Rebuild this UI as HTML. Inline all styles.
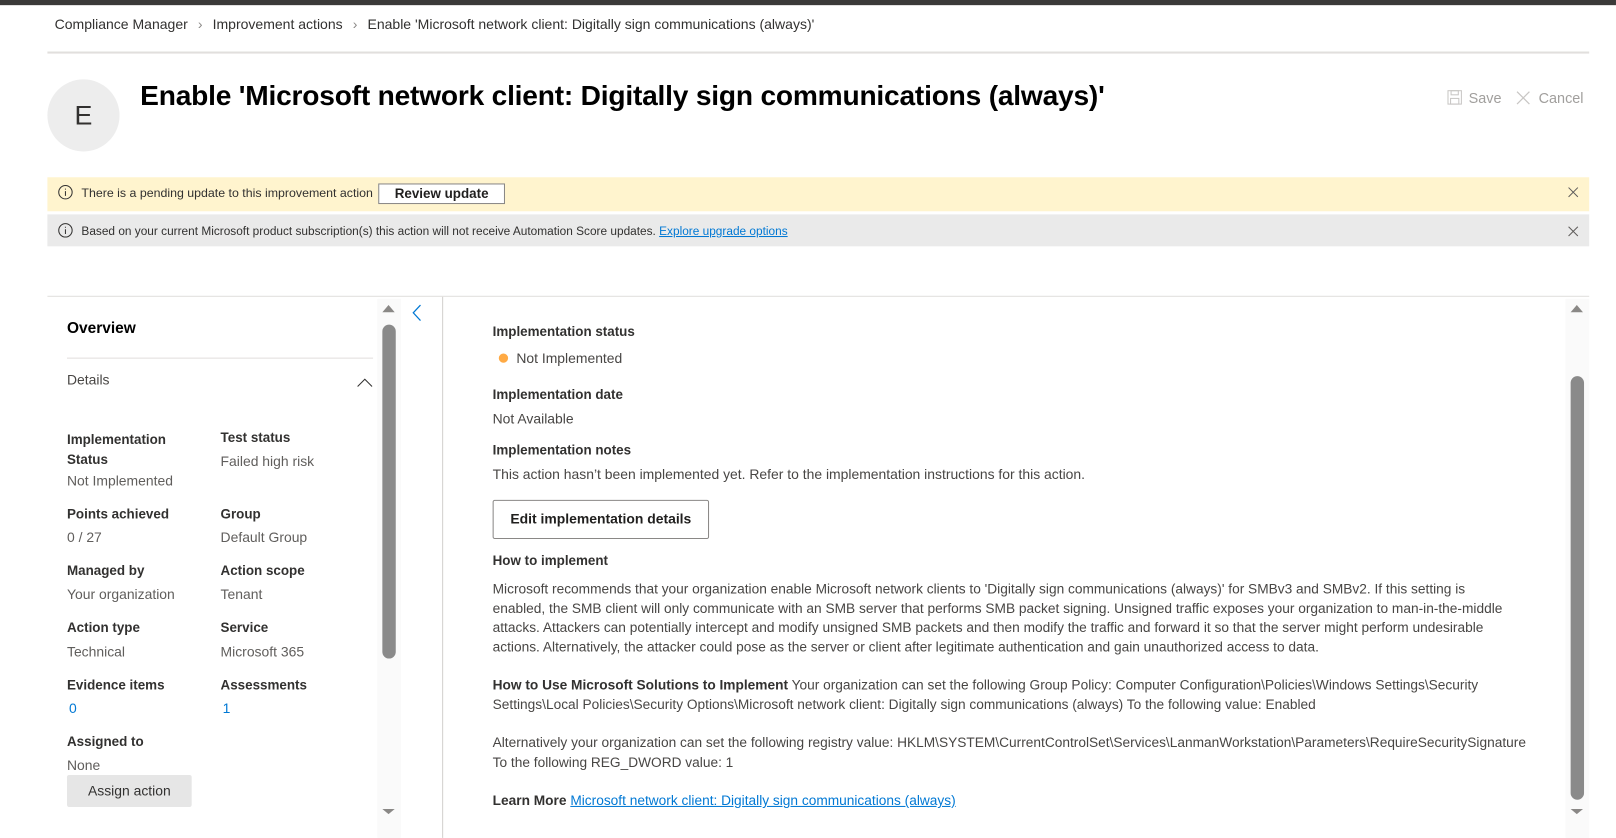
<!DOCTYPE html>
<html><head><meta charset="utf-8"><style>
*{margin:0;padding:0;box-sizing:border-box}
html,body{width:1616px;height:813px;overflow:hidden;background:#fff}
#w{position:absolute;left:0;top:0;width:1568px;height:789px;transform:scale(1.0306);transform-origin:0 0;font-family:"Liberation Sans",sans-serif;color:#323130;font-size:13px}
.a{position:absolute;white-space:nowrap}
.lb{font-size:13px;color:#323130;font-weight:600}
.v{font-size:13.5px;color:#605e5c}
.p{font-size:13.3px;color:#484644;line-height:18.7px}
.lnk{color:#0078d4}
</style></head><body><div id="w">
<div class="a" style="left:0;top:0;width:1568px;height:5px;background:#3b3a39"></div>
<div class="a" style="left:53px;top:16px;font-size:13.6px;color:#323130">Compliance Manager <span style="color:#8a8886;margin:0 6px">&#x203A;</span> Improvement actions <span style="color:#8a8886;margin:0 6px">&#x203A;</span> Enable 'Microsoft network client: Digitally sign communications (always)'</div>
<div class="a" style="left:46px;top:50px;width:1496px;height:2px;background:#e1dfdd"></div>
<div class="a" style="left:46px;top:77px;width:70px;height:70px;border-radius:50%;background:#ededed;font-size:26px;line-height:70px;text-align:center;color:#323130">E</div>
<div class="a" style="left:136px;top:77px;font-size:27.3px;font-weight:bold;color:#000;letter-spacing:-0.2px">Enable 'Microsoft network client: Digitally sign communications (always)'</div>
<div class="a" style="left:1404px;top:87px;font-size:14px;color:#a19f9d"><svg width="15" height="15" viewBox="0 0 15 15" style="vertical-align:-2px;margin-right:6px"><rect x="1" y="1" width="13" height="13" fill="none" stroke="#c8c6c4"/><rect x="4" y="1" width="7" height="4" fill="none" stroke="#c8c6c4"/><rect x="3.5" y="8.5" width="8" height="5.5" fill="none" stroke="#c8c6c4"/></svg>Save<svg width="14" height="14" viewBox="0 0 14 14" style="vertical-align:-2px;margin:0 8px 0 14px"><path d="M1 1L13 13M13 1L1 13" stroke="#c8c6c4" stroke-width="1.2"/></svg>Cancel</div>
<div class="a" style="left:46px;top:172px;width:1496px;height:33px;background:#fff4ce"></div>
<div class="a" style="left:56px;top:179px;font-size:12px;color:#323130"><svg width="15" height="15" viewBox="0 0 15 15" style="vertical-align:-3px;margin-right:8px"><circle cx="7.5" cy="7.5" r="6.5" fill="none" stroke="#323130"/><path d="M7.5 6.5V11M7.5 4v1" stroke="#323130"/></svg>There is a pending update to this improvement action</div>
<div class="a" style="left:367px;top:178px;width:123px;height:20px;border:1px solid #8a8886;background:#fff;font-size:13px;font-weight:600;text-align:center;line-height:18px;color:#201f1e">Review update</div>
<div class="a" style="left:1521px;top:180px"><svg width="11" height="11"><path d="M1 1L10 10M10 1L1 10" stroke="#605e5c"/></svg></div>
<div class="a" style="left:46px;top:208px;width:1496px;height:31px;background:#eaeaea"></div>
<div class="a" style="left:56px;top:216px;font-size:11.5px;color:#323130"><svg width="15" height="15" viewBox="0 0 15 15" style="vertical-align:-3px;margin-right:8px"><circle cx="7.5" cy="7.5" r="6.5" fill="none" stroke="#323130"/><path d="M7.5 6.5V11M7.5 4v1" stroke="#323130"/></svg>Based on your current Microsoft product subscription(s) this action will not receive Automation Score updates. <span style="color:#0078d4;text-decoration:underline">Explore upgrade options</span></div>
<div class="a" style="left:1521px;top:218px"><svg width="11" height="11"><path d="M1 1L10 10M10 1L1 10" stroke="#605e5c"/></svg></div>
<div class="a" style="left:46px;top:287px;width:1496px;height:1px;background:#e1dfdd"></div>
<div class="a" style="left:65px;top:310px;font-size:15px;font-weight:bold;color:#000">Overview</div>
<div class="a" style="left:65px;top:347px;width:297px;height:1px;background:#e1dfdd"></div>
<div class="a v" style="left:65px;top:361px;color:#484644">Details</div>
<div class="a" style="left:346px;top:364px"><svg width="16" height="9"><path d="M1 8L8 1L15 8" fill="none" stroke="#323130"/></svg></div>
<div class="a lb" style="left:65px;top:417px;line-height:19px;white-space:normal;width:130px">Implementation Status</div>
<div class="a v" style="left:65px;top:459px">Not Implemented</div>
<div class="a lb" style="left:214px;top:417px">Test status</div>
<div class="a v" style="left:214px;top:440px">Failed high risk</div>
<div class="a lb" style="left:65px;top:491px">Points achieved</div><div class="a v" style="left:65px;top:514px">0 / 27</div>
<div class="a lb" style="left:214px;top:491px">Group</div><div class="a v" style="left:214px;top:514px">Default Group</div>
<div class="a lb" style="left:65px;top:546px">Managed by</div><div class="a v" style="left:65px;top:569px">Your organization</div>
<div class="a lb" style="left:214px;top:546px">Action scope</div><div class="a v" style="left:214px;top:569px">Tenant</div>
<div class="a lb" style="left:65px;top:601px">Action type</div><div class="a v" style="left:65px;top:625px">Technical</div>
<div class="a lb" style="left:214px;top:601px">Service</div><div class="a v" style="left:214px;top:625px">Microsoft 365</div>
<div class="a lb" style="left:65px;top:657px">Evidence items</div><div class="a v lnk" style="left:67px;top:680px">0</div>
<div class="a lb" style="left:214px;top:657px">Assessments</div><div class="a v lnk" style="left:216px;top:680px">1</div>
<div class="a lb" style="left:65px;top:712px">Assigned to</div><div class="a v" style="left:65px;top:735px">None</div>
<div class="a" style="left:65px;top:752px;width:121px;height:31px;background:#e6e6e6;border-radius:2px;font-size:13.5px;line-height:31px;text-align:center;color:#323130">Assign action</div>
<div class="a" style="left:366px;top:290px;width:23px;height:523px;background:#fafafa"></div>
<div class="a" style="left:371px;top:296px;width:0;height:0;border-left:6px solid transparent;border-right:6px solid transparent;border-bottom:7px solid #8a8886"></div>
<div class="a" style="left:371px;top:315px;width:13px;height:324px;background:#8a8a8a;border-radius:7px"></div>
<div class="a" style="left:371px;top:785px;width:0;height:0;border-left:6px solid transparent;border-right:6px solid transparent;border-top:5px solid #8a8886"></div>
<div class="a" style="left:399px;top:295px"><svg width="10" height="17"><path d="M9 1L2 8.5L9 16" fill="none" stroke="#0078d4" stroke-width="1.2"/></svg></div>
<div class="a" style="left:429px;top:288px;width:1px;height:525px;background:#d2d0ce"></div>
<div class="a lb" style="left:478px;top:314px">Implementation status</div>
<div class="a v" style="left:484px;top:340px;color:#484644"><span style="display:inline-block;width:9px;height:9px;border-radius:50%;background:#ffaa44;margin-right:8px"></span>Not Implemented</div>
<div class="a lb" style="left:478px;top:375px">Implementation date</div>
<div class="a v" style="left:478px;top:399px;color:#484644">Not Available</div>
<div class="a lb" style="left:478px;top:429px">Implementation notes</div>
<div class="a v" style="left:478px;top:453px;color:#484644">This action hasn’t been implemented yet. Refer to the implementation instructions for this action.</div>
<div class="a" style="left:478px;top:485px;width:210px;height:38px;border:1px solid #8a8886;border-radius:2px;font-size:13.5px;font-weight:600;line-height:36px;text-align:center;color:#201f1e">Edit implementation details</div>
<div class="a lb" style="left:478px;top:536px">How to implement</div>
<div class="a p" style="left:478px;top:563px">Microsoft recommends that your organization enable Microsoft network clients to 'Digitally sign communications (always)' for SMBv3 and SMBv2. If this setting is<br>enabled, the SMB client will only communicate with an SMB server that performs SMB packet signing. Unsigned traffic exposes your organization to man-in-the-middle<br>attacks. Attackers can potentially intercept and modify unsigned SMB packets and then modify the traffic and forward it so that the server might perform undesirable<br>actions. Alternatively, the attacker could pose as the server or client after legitimate authentication and gain unauthorized access to data.</div>
<div class="a p" style="left:478px;top:656px"><b style="color:#323130">How to Use Microsoft Solutions to Implement</b> Your organization can set the following Group Policy: Computer Configuration\Policies\Windows Settings\Security<br>Settings\Local Policies\Security Options\Microsoft network client: Digitally sign communications (always) To the following value: Enabled</div>
<div class="a p" style="left:478px;top:712px">Alternatively your organization can set the following registry value: HKLM\SYSTEM\CurrentControlSet\Services\LanmanWorkstation\Parameters\RequireSecuritySignature<br>To the following REG_DWORD value: 1</div>
<div class="a p" style="left:478px;top:768px"><b style="color:#323130">Learn More</b> <span style="color:#0078d4;text-decoration:underline">Microsoft network client: Digitally sign communications (always)</span></div>
<div class="a" style="left:1519px;top:290px;width:23px;height:523px;background:#fafafa"></div>
<div class="a" style="left:1524px;top:296px;width:0;height:0;border-left:6px solid transparent;border-right:6px solid transparent;border-bottom:7px solid #8a8886"></div>
<div class="a" style="left:1524px;top:365px;width:13px;height:411px;background:#8a8a8a;border-radius:7px"></div>
<div class="a" style="left:1524px;top:785px;width:0;height:0;border-left:6px solid transparent;border-right:6px solid transparent;border-top:5px solid #8a8886"></div>
</div></body></html>
